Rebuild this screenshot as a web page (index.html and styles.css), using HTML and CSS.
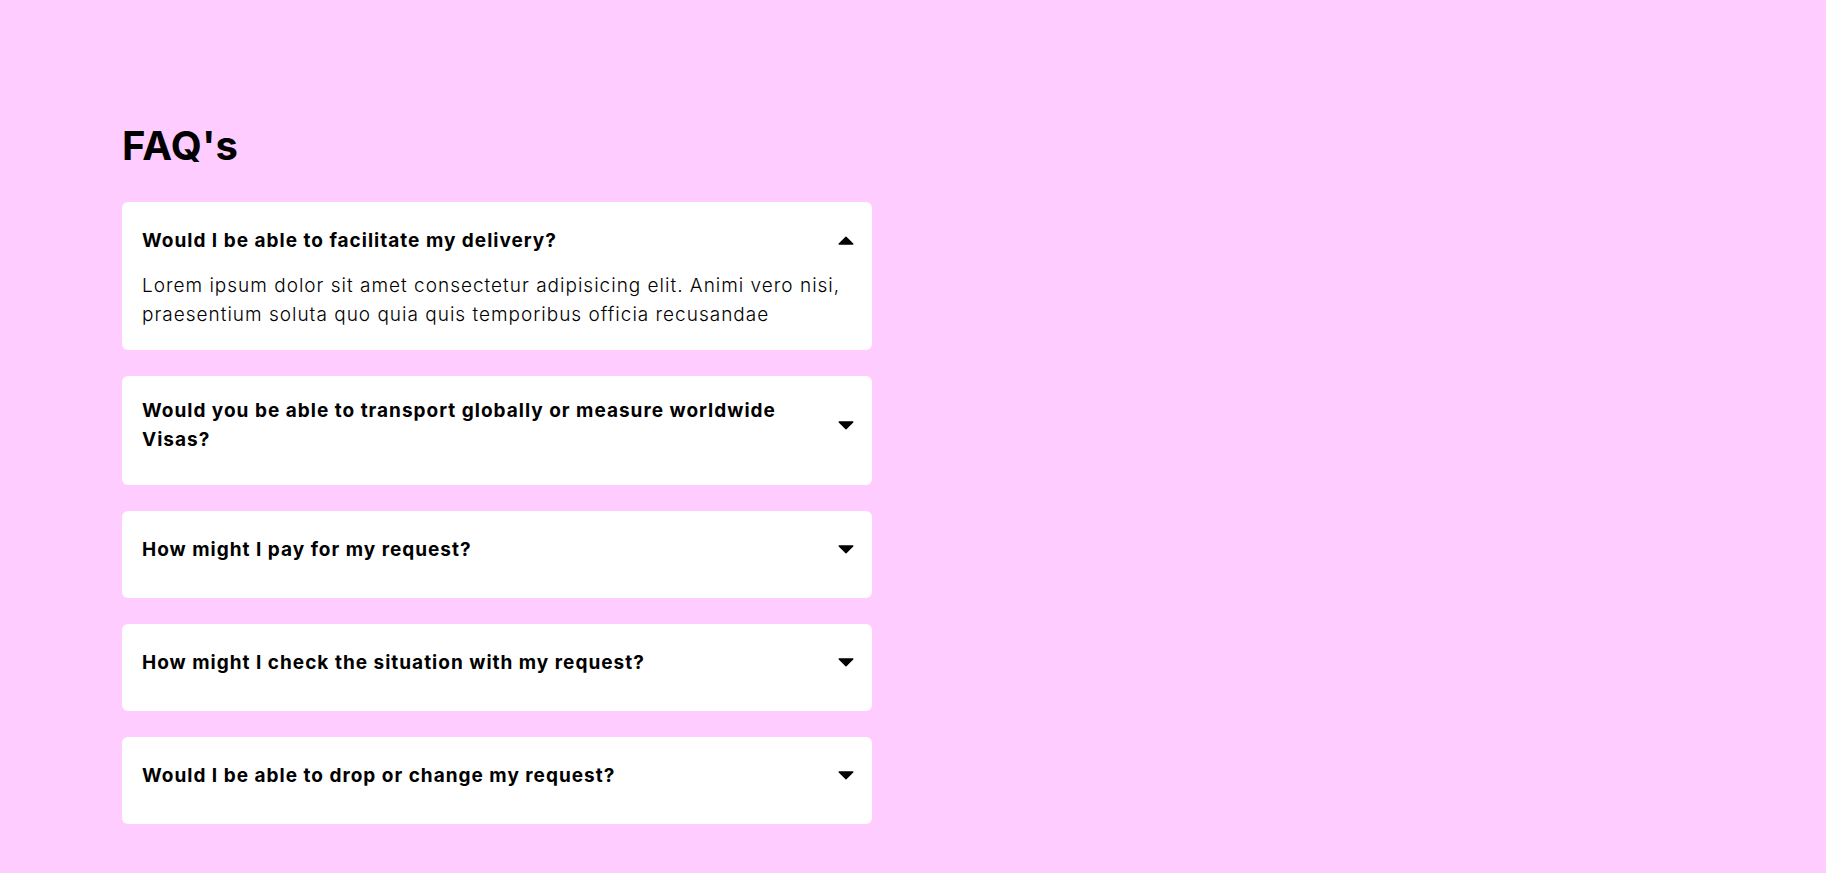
FILE: index.html
```html
<!DOCTYPE html>
<html lang="en">
<head>
<meta charset="utf-8">
<title>FAQ's</title>
<link rel="stylesheet" href="styles.css">
</head>
<body>
<main class="faq-section">
  <h1 class="faq-heading">FAQ's</h1>
  <div class="faq-list">
    <div class="faq open">
      <div class="faq-title">
        <h3 class="faq-question">Would I be able to facilitate my delivery?</h3>
        <svg class="caret" width="16" height="9" viewBox="0 0 16 9"><path d="M1.2 8 H14.8 L8 1.2 Z" fill="#000" stroke="#000" stroke-width="1.4" stroke-linejoin="round"/></svg>
      </div>
      <p class="faq-answer">Lorem ipsum dolor sit amet consectetur adipisicing elit. Animi vero nisi, praesentium soluta quo quia quis temporibus officia recusandae</p>
    </div>
    <div class="faq">
      <div class="faq-title">
        <h3 class="faq-question">Would you be able to transport globally or measure worldwide Visas?</h3>
        <svg class="caret" width="16" height="9" viewBox="0 0 16 9"><path d="M1.2 1 H14.8 L8 7.8 Z" fill="#000" stroke="#000" stroke-width="1.4" stroke-linejoin="round"/></svg>
      </div>
      <p class="faq-answer">Lorem ipsum dolor sit amet consectetur adipisicing elit. Animi vero nisi, praesentium soluta quo quia quis temporibus officia recusandae</p>
    </div>
    <div class="faq">
      <div class="faq-title">
        <h3 class="faq-question">How might I pay for my request?</h3>
        <svg class="caret" width="16" height="9" viewBox="0 0 16 9"><path d="M1.2 1 H14.8 L8 7.8 Z" fill="#000" stroke="#000" stroke-width="1.4" stroke-linejoin="round"/></svg>
      </div>
      <p class="faq-answer">Lorem ipsum dolor sit amet consectetur adipisicing elit. Animi vero nisi, praesentium soluta quo quia quis temporibus officia recusandae</p>
    </div>
    <div class="faq">
      <div class="faq-title">
        <h3 class="faq-question">How might I check the situation with my request?</h3>
        <svg class="caret" width="16" height="9" viewBox="0 0 16 9"><path d="M1.2 1 H14.8 L8 7.8 Z" fill="#000" stroke="#000" stroke-width="1.4" stroke-linejoin="round"/></svg>
      </div>
      <p class="faq-answer">Lorem ipsum dolor sit amet consectetur adipisicing elit. Animi vero nisi, praesentium soluta quo quia quis temporibus officia recusandae</p>
    </div>
    <div class="faq">
      <div class="faq-title">
        <h3 class="faq-question">Would I be able to drop or change my request?</h3>
        <svg class="caret" width="16" height="9" viewBox="0 0 16 9"><path d="M1.2 1 H14.8 L8 7.8 Z" fill="#000" stroke="#000" stroke-width="1.4" stroke-linejoin="round"/></svg>
      </div>
      <p class="faq-answer">Lorem ipsum dolor sit amet consectetur adipisicing elit. Animi vero nisi, praesentium soluta quo quia quis temporibus officia recusandae</p>
    </div>
  </div>
</main>
</body>
</html>
```
FILE: styles.css
```css
* { box-sizing: border-box; }

html, body {
  margin: 0;
  padding: 0;
}

body {
  background: #ffccff;
  color: #000;
  font-family: Inter, "Open Sans", "Liberation Sans", sans-serif;
  min-height: 873px;
}

.faq-section {
  width: 750px;
  margin-left: 122px;
  padding-top: 122px;
}

.faq-heading {
  margin: 0 0 32px;
  font-size: 40px;
  line-height: 48px;
  font-weight: 700;
  letter-spacing: 0.3px;
}

.faq-list {
  display: flex;
  flex-direction: column;
  gap: 26px;
}

.faq {
  background: #fff;
  border-radius: 6px;
  padding: 20px 18px 20px 20px;
}

.faq-title {
  display: flex;
  align-items: center;
  justify-content: space-between;
  min-height: 37px;
  margin-bottom: 10px;
}

.faq-question {
  margin: 0;
  font-size: 19px;
  line-height: 29.5px;
  font-weight: 700;
  letter-spacing: 1px;
  max-width: 660px;
}

.caret {
  flex: none;
  display: block;
}

.faq-answer {
  display: none;
  margin: 0;
  padding-top: 2px;
  font-size: 19px;
  line-height: 29.4px;
  font-weight: 300;
  letter-spacing: 1px;
}

.faq.open .faq-answer {
  display: block;
}
```
